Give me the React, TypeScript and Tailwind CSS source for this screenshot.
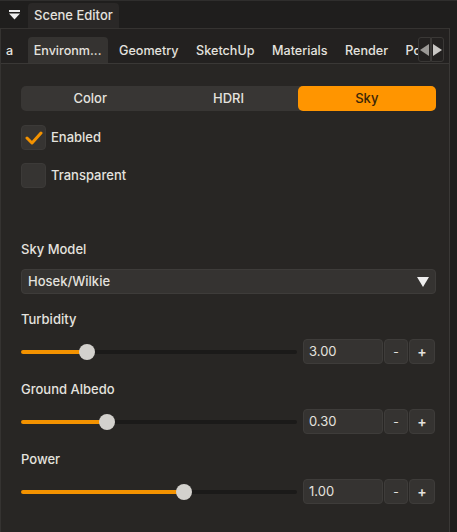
import React from "react";

const tabs = ["Environm...", "Geometry", "SketchUp", "Materials", "Render", "Post"];

function Slider({ pct, value }: { pct: number; value: string }) {
  return (
    <div className="flex items-center h-[25px]">
      <div className="relative w-[276px] h-[4px] rounded-full bg-[#1b1a19]">
        <div className="absolute left-0 top-0 h-full rounded-full bg-[#f39200]" style={{ width: `${pct}%` }} />
        <div
          className="absolute top-1/2 -translate-y-1/2 -translate-x-1/2 w-[16px] h-[16px] rounded-full bg-[#d3d1cd]"
          style={{ left: `${pct}%` }}
        />
      </div>
      <div className="ml-[6px] flex gap-[1px]">
        <div className="w-[80px] h-[25px] rounded-[4px] bg-[#353331] border border-[#3e3c3a] flex items-center pl-[5px] text-[13px] text-[#e4e2df]">
          {value}
        </div>
        <div className="w-[24px] h-[25px] rounded-[4px] bg-[#353331] border border-[#3e3c3a] flex items-center justify-center text-[12px] text-[#e4e2df]">
          -
        </div>
        <div className="w-[26px] h-[25px] rounded-[4px] bg-[#353331] border border-[#3e3c3a] flex items-center justify-center text-[14px] font-semibold text-[#e4e2df]">
          +
        </div>
      </div>
    </div>
  );
}

function Checkbox({ checked, label }: { checked: boolean; label: string }) {
  return (
    <div className="flex items-center h-[25px]">
      <div className="w-[25px] h-[25px] rounded-[4px] bg-[#363432] border border-[#3c3a38] flex items-center justify-center">
        {checked && (
          <svg width="18" height="14" viewBox="0 0 18 14">
            <path d="M2 7 L7 12 L16 2" fill="none" stroke="#f39200" strokeWidth="3" strokeLinecap="round" strokeLinejoin="round" />
          </svg>
        )}
      </div>
      <span className="ml-[5px] text-[13px] font-medium text-[#e4e2df]">{label}</span>
    </div>
  );
}

export default function App() {
  return (
    <div
      className="w-[457px] h-[532px] bg-[#1f1e1d] flex flex-col overflow-hidden"
      style={{ fontFamily: "Inter, 'Noto Sans', sans-serif" }}
    >
      {/* header */}
      <div className="h-[28px] border-t border-[#2f2e2d] flex items-end">
        <div className="w-[28px] h-full flex items-center justify-center">
          <svg width="11" height="10" viewBox="0 0 11 10">
            <rect x="0" y="0" width="11" height="2" fill="#eeeeee" />
            <path d="M0 3.5 H11 L5.5 9.5 Z" fill="#eeeeee" />
          </svg>
        </div>
        <div className="h-[25px] px-[6px] rounded-t-[4px] bg-[#2a2827] flex items-center text-[13px] font-medium text-[#e4e2df]">
          Scene Editor
        </div>
      </div>

      {/* panel */}
      <div className="flex-1 bg-[#282624] border-l border-[#343230] border-t border-[#353331] mr-[7px] border-r border-r-[#3a3836] flex flex-col">
        {/* tab row */}
        <div className="h-[35px] bg-[#232120] border-b border-[#3a3836] flex items-end relative">
          <div className="w-[417px] overflow-hidden flex items-end h-full">
            <div className="flex gap-[5.5px] items-end shrink-0 ml-[-1px]">
              <div className="h-[26px] pl-[6px] pr-[9px] pt-[2px] flex items-center text-[12.6px] font-medium text-[#e4e2df]">a</div>
              <div className="h-[26px] px-[6px] pt-[2px] rounded-t-[4px] bg-[#353331] flex items-center text-[12.6px] font-medium text-[#e4e2df]">
                {tabs[0]}
              </div>
              {tabs.slice(1).map((t) => (
                <div key={t} className="h-[26px] px-[6px] pt-[2px] flex items-center text-[12.6px] font-medium text-[#e4e2df]">
                  {t}
                </div>
              ))}
            </div>
          </div>
          <div className="flex h-[25px] mb-[1px]">
            <div className="w-[13px] h-full rounded-l-[3px] border border-[#3a3836] flex items-center justify-center">
              <svg width="9" height="12" viewBox="0 0 9 12">
                <path d="M9 0 V12 L0 6 Z" fill="#9b9996" />
              </svg>
            </div>
            <div className="w-[13px] h-full rounded-r-[3px] border border-[#3a3836] flex items-center justify-center">
              <svg width="9" height="12" viewBox="0 0 9 12">
                <path d="M0 0 V12 L9 6 Z" fill="#c9c7c4" />
              </svg>
            </div>
          </div>
        </div>

        {/* content */}
        <div className="pl-[20px] pr-[13px] pt-[22px] flex flex-col">
          <div className="h-[25px] rounded-[5px] bg-[#383634] flex text-[13px] font-medium">
            <div className="flex-1 flex items-center justify-center text-[#e4e2df]">Color</div>
            <div className="flex-1 flex items-center justify-center text-[#e4e2df]">HDRI</div>
            <div className="flex-1 flex items-center justify-center rounded-[5px] bg-[#ff9500] text-[#3a2608]">Sky</div>
          </div>

          <div className="mt-[14px] flex flex-col gap-[13px]">
            <Checkbox checked label="Enabled" />
            <Checkbox checked={false} label="Transparent" />
          </div>

          <div className="mt-[53px] text-[13px] font-medium text-[#e4e2df] h-[18px] flex items-center">Sky Model</div>
          <div className="mt-[10px] h-[25px] rounded-[4px] bg-[#353331] border border-[#3e3c3a] flex items-center justify-between px-[6px] text-[13px] font-medium text-[#e4e2df]">
            <span>Hosek/Wilkie</span>
            <svg width="12" height="10" viewBox="0 0 12 10">
              <path d="M0 0 H12 L6 10 Z" fill="#eeeeee" />
            </svg>
          </div>

          <div className="mt-[17px] text-[13px] font-medium text-[#e4e2df] h-[18px] flex items-center">Turbidity</div>
          <div className="mt-[10px]">
            <Slider pct={24} value="3.00" />
          </div>

          <div className="mt-[17px] text-[13px] font-medium text-[#e4e2df] h-[18px] flex items-center">Ground Albedo</div>
          <div className="mt-[10px]">
            <Slider pct={31} value="0.30" />
          </div>

          <div className="mt-[17px] text-[13px] font-medium text-[#e4e2df] h-[18px] flex items-center">Power</div>
          <div className="mt-[10px]">
            <Slider pct={59} value="1.00" />
          </div>
        </div>
      </div>
    </div>
  );
}
